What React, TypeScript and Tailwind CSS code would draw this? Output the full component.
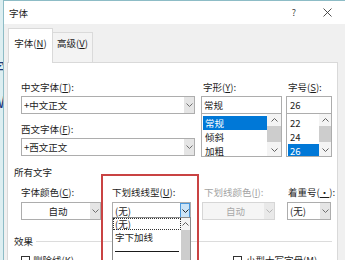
import React from 'react';

function U({ children }: { children: React.ReactNode }) {
  return <span className="underline underline-offset-[1px] decoration-[0.5px]">{children}</span>;
}

function Chev({ up = false, color = '#6e6e6e' }: { up?: boolean; color?: string }) {
  return (
    <svg width="7" height="4" viewBox="0 0 7 4" className="block">
      <polyline
        points={up ? '0.5,3.5 3.5,0.5 6.5,3.5' : '0.5,0.5 3.5,3.5 6.5,0.5'}
        fill="none"
        stroke={color}
        strokeWidth="1"
      />
    </svg>
  );
}

function Combo({
  text,
  className = '',
  center = false,
  disabled = false,
  focused = false,
}: {
  text: string;
  className?: string;
  center?: boolean;
  disabled?: boolean;
  focused?: boolean;
}) {
  return (
    <div
      className={`h-[18px] border flex ${
        disabled ? 'border-[#d6d6d6] bg-[#f5f5f5]' : 'border-[#adadad] bg-white'
      } ${className}`}
    >
      <div
        className={`flex-1 flex items-center whitespace-nowrap ${center ? 'justify-center pl-[4px]' : 'pl-[2px]'} ${
          disabled ? 'text-[#a8a8a8]' : ''
        }`}
      >
        {text}
      </div>
      <div
        className={`w-[10px] flex items-center justify-center ${
          focused ? 'bg-[#cce4f7] border border-[#4a98dc]' : disabled ? 'bg-[#e9e9e9]' : 'bg-[#e5e5e5]'
        }`}
      >
        <Chev color={focused ? '#2a2a2a' : disabled ? '#b4b4b4' : '#707070'} />
      </div>
    </div>
  );
}

function ListBox({ items, sel, sb }: { items: string[]; sel: number; sb: string }) {
  return (
    <div className="-mt-px h-[44px] border border-[#adadad] bg-white flex overflow-hidden">
      <div className="flex-1 pt-[2px] pl-px">
        {items.map((t, i) => (
          <div
            key={t}
            className={`h-[14px] flex items-center pl-[2px] ${i === sel ? 'bg-[#0078d7] text-white' : ''}`}
          >
            {t}
          </div>
        ))}
      </div>
      <div className={`${sb} flex flex-col bg-[#f4f4f4]`}>
        <div className="h-[12px] flex items-center justify-center">
          <Chev up color="#606060" />
        </div>
        <div className="h-[16px] bg-[#cdcdcd]" />
        <div className="flex-1" />
        <div className="h-[12px] flex items-center justify-center">
          <Chev color="#606060" />
        </div>
      </div>
    </div>
  );
}

export default function App() {
  return (
    <div className="relative w-[345px] h-[260px] overflow-hidden bg-[#ddeef1] font-['Noto_Sans_CJK_SC','Noto_Sans',sans-serif] text-[9.5px] leading-[12px] text-[#1d1d1d]">
      {/* glimpses of the window behind */}
      <span className="absolute left-[-11px] top-[58px] text-[16px] leading-[18px] text-[#1f3b7c]">字</span>
      <span className="absolute left-[-9px] top-[92px] text-[16px] leading-[18px] text-[#1f3b7c]">W</span>

      <div className="relative ml-[3px] w-[342px] h-[300px] border-l border-t border-[#8dbcc6] bg-[#f0f0f0] flex flex-col">
        {/* title bar */}
        <div className="shrink-0 h-[23px] bg-white flex items-center pl-[5px] pr-[13px]">
          <span>字体</span>
          <span className="ml-auto text-[9px] text-[#444]">?</span>
          <svg width="9" height="9" viewBox="0 0 9 9" className="ml-[27px]">
            <path d="M0.5 0.5 L8.5 8.5 M8.5 0.5 L0.5 8.5" stroke="#3a3a3a" strokeWidth="0.9" />
          </svg>
        </div>

        {/* tabs */}
        <div className="shrink-0 h-[38px] flex items-end pl-[4px]">
          <div className="relative z-10 -mb-px h-[35px] w-[45px] bg-white border-l border-t border-r border-[#d9d9d9] flex justify-center pt-[8px]">
            <span>
              字体(<U>N</U>)
            </span>
          </div>
          <div className="h-[30px] w-[40px] border-t border-r border-[#dadada] bg-[#f3f3f3] flex justify-center pt-[4px]">
            <span>
              高级(<U>V</U>)
            </span>
          </div>
        </div>

        {/* tab panel */}
        <div className="relative ml-[3px] w-[331px] flex-1 bg-white border border-[#d9d9d9]">
          <div className="flex pt-[18px] pl-[13px]">
            <div className="w-[174px] flex flex-col">
              <div>
                中文字体(<U>T</U>):
              </div>
              <Combo className="mt-[3px]" text="+中文正文" />
              <div className="mt-[9px]">
                西文字体(<U>F</U>):
              </div>
              <Combo className="mt-[3px]" text="+西文正文" />
            </div>

            <div className="w-[81px] ml-[6px] flex flex-col">
              <div className="pl-[2px]">
                字形(<U>Y</U>):
              </div>
              <div className="mt-[3px] h-[18px] border border-[#adadad] pl-[2px] flex items-center">常规</div>
              <ListBox items={['常规', '倾斜', '加粗']} sel={0} sb="w-[14px]" />
            </div>

            <div className="w-[46px] ml-[4px] flex flex-col">
              <div className="pl-[2px]">
                字号(<U>S</U>):
              </div>
              <div className="mt-[3px] h-[18px] border border-[#adadad] pl-[3px] flex items-center">26</div>
              <ListBox items={['22', '24', '26']} sel={2} sb="w-[12px]" />
            </div>
          </div>

          <div className="mt-[9px] pl-[6px]">所有文字</div>

          <div className="mt-[8px] pl-[13px] flex">
            <div className="w-[80px] flex flex-col">
              <div className="whitespace-nowrap">
                字体颜色(<U>C</U>):
              </div>
              <Combo className="mt-[4px]" text="自动" center />
            </div>

            <div className="w-[79px] ml-[11px] flex flex-col">
              <div className="whitespace-nowrap">
                下划线线型(<U>U</U>):
              </div>
              <div className="relative mt-[4px]">
                <Combo text="(无)" focused />
                <div className="absolute left-0 top-[15px] z-20 w-[79px] h-[60px] bg-white border border-[#8a8a8a] flex">
                  <div className="flex-1 flex flex-col">
                    <div className="h-[12px] border border-dotted border-[#303030] flex items-center pl-px">(无)</div>
                    <div className="h-[14px] flex items-center pl-[2px]">字下加线</div>
                    <div className="h-[14px] flex items-center px-[2px]">
                      <div className="w-[64px] h-px bg-[#1a1a1a]" />
                    </div>
                  </div>
                  <div className="w-[9px] flex flex-col bg-[#f4f4f4]">
                    <div className="h-[12px] flex items-center justify-center">
                      <Chev up color="#606060" />
                    </div>
                    <div className="flex-1 bg-[#cdcdcd]" />
                  </div>
                </div>
              </div>
            </div>

            <div className="w-[73px] ml-[11px] flex flex-col">
              <div className="pl-[2px] whitespace-nowrap text-[#a3a3a3]">
                下划线颜色(<U>I</U>):
              </div>
              <Combo className="mt-[4px]" text="自动" center disabled />
            </div>

            <div className="w-[44px] ml-[12px] flex flex-col">
              <div className="pl-px whitespace-nowrap">
                着重号(<U>·</U>):
              </div>
              <Combo className="mt-[4px]" text="(无)" />
            </div>
          </div>

          <div className="mt-[15px] pl-[6px] flex items-center">
            <span>效果</span>
            <div className="ml-[3px] h-px w-[296px] bg-[#dcdcdc]" />
          </div>

          <div className="mt-[7px] pl-[13px] flex">
            <div className="w-[212px] flex items-center">
              <div className="w-[9px] h-[9px] border border-[#333] bg-white" />
              <span className="ml-[3px]">
                删除线(<U>K</U>)
              </span>
            </div>
            <div className="flex items-center">
              <div className="w-[9px] h-[9px] border border-[#333] bg-white" />
              <span className="ml-[4px]">
                小型大写字母(<U>M</U>)
              </span>
            </div>
          </div>

          {/* red annotation box */}
          <div className="absolute left-[93px] top-[111px] w-[98px] h-[110px] border-2 border-[#c94343] z-30" />
        </div>
      </div>
    </div>
  );
}
